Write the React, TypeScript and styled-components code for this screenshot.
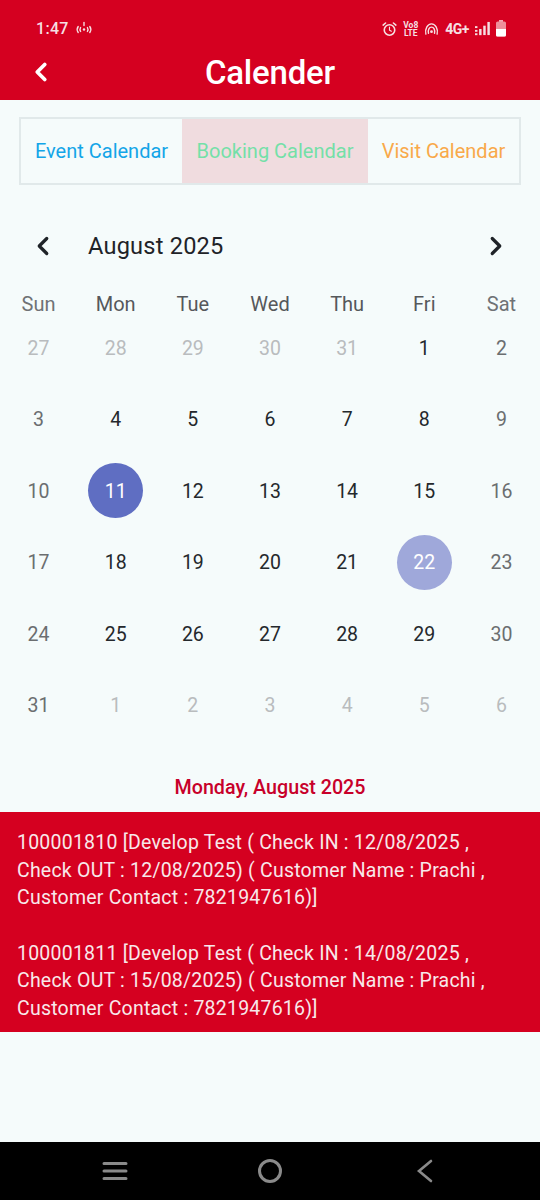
import styled, { createGlobalStyle } from 'styled-components';
import { ChevronLeft, ChevronRight } from 'lucide-react';

const GlobalStyle = createGlobalStyle`
  html, body {
    margin: 0;
    padding: 0;
    background: #f5fbfb;
    font-family: Roboto, 'Liberation Sans', sans-serif;
  }
  * { box-sizing: border-box; }
`;

const Screen = styled.div`
  width: 540px;
  height: 1200px;
  display: flex;
  flex-direction: column;
  background: #f5fbfb;
  overflow: hidden;
`;

const Header = styled.header`
  height: 100px;
  flex: none;
  background: #d50020;
  color: #fff;
  display: flex;
  flex-direction: column;
`;

const StatusBar = styled.div`
  height: 44px;
  padding: 13px 34px 0 36px;
  display: flex;
  align-items: center;
  justify-content: space-between;
`;

const StatusGroup = styled.div`
  display: flex;
  align-items: center;
  gap: 6px;
`;

const Time = styled.span`
  font-size: 16px;
  font-weight: 500;
  letter-spacing: 0.3px;
  color: #f6dfe2;
`;

const NetText = styled.span`
  font-size: 14px;
  font-weight: 700;
  letter-spacing: -0.5px;
  color: #f6dfe2;
`;

const VoLte = styled.span`
  font-size: 8.5px;
  font-weight: 700;
  line-height: 8px;
  text-align: center;
  color: #f6dfe2;
`;

const TitleBar = styled.div`
  flex: 1;
  display: grid;
  grid-template-columns: 82px 1fr 82px;
  align-items: center;
`;

const BackButton = styled.div`
  display: flex;
  padding-left: 26px;
`;

const PageTitle = styled.h1`
  margin: 0;
  text-align: center;
  font-size: 33px;
  font-weight: 500;
  letter-spacing: -0.2px;
`;

const Tabs = styled.div`
  margin: 17px 19px 0;
  height: 68px;
  display: grid;
  grid-template-columns: 161px 186px 1fr;
  border: 2px solid #e1e9ea;
  flex: none;
`;

const Tab = styled.div<{ $color: string; $active?: boolean }>`
  display: flex;
  align-items: center;
  justify-content: center;
  font-size: 20px;
  font-weight: 450;
  color: ${({ $color }) => $color};
  background: ${({ $active }) => ($active ? '#f0dcdf' : 'transparent')};
`;

const MonthRow = styled.div`
  margin-top: 39px;
  height: 44px;
  padding: 0 29px 0 28px;
  display: flex;
  align-items: center;
  flex: none;
`;

const MonthLabel = styled.div`
  flex: 1;
  margin-left: 30px;
  font-size: 23.6px;
  color: #1f2328;
  letter-spacing: 0.2px;
`;

const Weekdays = styled.div`
  margin-top: 28px;
  height: 16px;
  display: grid;
  grid-template-columns: repeat(7, 1fr);
  flex: none;
`;

const Weekday = styled.div<{ $weekend?: boolean }>`
  text-align: center;
  line-height: 16px;
  font-size: 20px;
  color: ${({ $weekend }) => ($weekend ? '#6f7275' : '#55585b')};
`;

const Days = styled.div`
  display: grid;
  grid-template-columns: repeat(7, 1fr);
  grid-auto-rows: 71.5px;
  flex: none;
`;

const DayCell = styled.div`
  display: flex;
  align-items: center;
  justify-content: center;
`;

type DayKind = 'muted' | 'weekend' | 'normal' | 'selected' | 'rangeEnd';

const dayColors: Record<DayKind, string> = {
  muted: '#b9bcbe',
  weekend: '#6b6e70',
  normal: '#24282c',
  selected: '#fff',
  rangeEnd: '#fff',
};

const dayBackgrounds: Record<DayKind, string> = {
  muted: 'transparent',
  weekend: 'transparent',
  normal: 'transparent',
  selected: '#5f6ec2',
  rangeEnd: '#9fa8da',
};

const DayNumber = styled.div<{ $kind: DayKind }>`
  width: 55px;
  height: 55px;
  padding-top: 1px;
  border-radius: 50%;
  display: flex;
  align-items: center;
  justify-content: center;
  font-size: 19.5px;
  color: ${({ $kind }) => dayColors[$kind]};
  background: ${({ $kind }) => dayBackgrounds[$kind]};
`;

const SelectedDate = styled.div`
  margin: 28px 0 5px;
  height: 38px;
  text-align: center;
  line-height: 38px;
  font-size: 19.7px;
  font-weight: 500;
  color: #c8002a;
  flex: none;
`;

const EventPanel = styled.section`
  height: 220px;
  flex: none;
  background: #d50020;
  color: #f8e8ea;
  padding: 17px 16px 0 17px;
  display: flex;
  flex-direction: column;
  gap: 28px;
`;

const EventText = styled.p`
  margin: 0;
  font-size: 19.5px;
  line-height: 27.5px;
  letter-spacing: 0.22px;
`;

const Spacer = styled.div`
  flex: 1;
`;

const NavBar = styled.nav`
  height: 58px;
  flex: none;
  background: #000;
  display: grid;
  grid-template-columns: repeat(3, 155px);
  justify-content: center;
`;

const NavItem = styled.div`
  display: flex;
  align-items: center;
  justify-content: center;
`;

const weekdays = ['Sun', 'Mon', 'Tue', 'Wed', 'Thu', 'Fri', 'Sat'];

const cells: { n: number; kind: DayKind }[] = [
  ...[27, 28, 29, 30, 31].map((n) => ({ n, kind: 'muted' as DayKind })),
  { n: 1, kind: 'normal' },
  { n: 2, kind: 'weekend' },
  ...Array.from({ length: 31 - 2 }, (_, i) => {
    const n = i + 3;
    const col = (n + 4) % 7;
    let kind: DayKind = col === 0 || col === 6 ? 'weekend' : 'normal';
    if (n === 11) kind = 'selected';
    if (n === 22) kind = 'rangeEnd';
    return { n, kind };
  }),
  ...[1, 2, 3, 4, 5, 6].map((n) => ({ n, kind: 'muted' as DayKind })),
];

const events = [
  '100001810 [Develop Test ( Check IN : 12/08/2025 , Check OUT : 12/08/2025) ( Customer Name : Prachi , Customer Contact : 7821947616)]',
  '100001811 [Develop Test ( Check IN : 14/08/2025 , Check OUT : 15/08/2025) ( Customer Name : Prachi , Customer Contact : 7821947616)]',
];

function HotspotIcon() {
  return (
    <svg width="18" height="16" viewBox="0 0 18 16" fill="none" stroke="#f6dfe2" strokeWidth="1.4" strokeLinecap="round">
      <path d="M3.2 5.5c-1.4 2-1.4 4 0 6" />
      <path d="M5.6 6.5c-.8 1.3-.8 2.7 0 4" />
      <path d="M14.8 5.5c1.4 2 1.4 4 0 6" />
      <path d="M12.4 6.5c.8 1.3.8 2.7 0 4" />
      <circle cx="9" cy="8.5" r="1.2" fill="#f6dfe2" stroke="none" />
      <path d="M9 1.5v3" />
    </svg>
  );
}

function AlarmIcon() {
  return (
    <svg width="15" height="16" viewBox="0 0 16 16" fill="none" stroke="#f6dfe2" strokeWidth="1.7" strokeLinecap="round">
      <circle cx="8" cy="9" r="5.6" />
      <path d="M8 6v3.2l2 1.2" strokeWidth="1.2" />
      <path d="M1.2 3.8 3.8 1.6M14.8 3.8 12.2 1.6" />
    </svg>
  );
}

function WifiCallIcon() {
  return (
    <svg width="15" height="16" viewBox="0 0 16 16" fill="none" stroke="#f6dfe2" strokeWidth="1.5" strokeLinecap="round">
      <path d="M2 13.5C.6 8 3.8 2.5 8 2.5s7.4 5.5 6 11" />
      <path d="M4.8 12.5C4 9 5.6 6 8 6s4 3 3.2 6.5" />
      <circle cx="8" cy="10.8" r="1.5" fill="#f6dfe2" stroke="none" />
    </svg>
  );
}

function SignalIcon() {
  return (
    <svg width="15" height="15" viewBox="0 0 16 15" fill="#f6dfe2">
      <rect x="0" y="5" width="2.6" height="2" />
      <rect x="0" y="9" width="2.6" height="2" />
      <rect x="0" y="12.6" width="2.6" height="2" />
      <rect x="4.4" y="8" width="2.6" height="6.6" />
      <rect x="8.8" y="4.5" width="2.6" height="10" />
      <rect x="13.2" y="0.5" width="2.6" height="14" />
    </svg>
  );
}

function BatteryIcon() {
  return (
    <svg width="10" height="17" viewBox="0 0 10 17">
      <rect x="3" y="0" width="4" height="2" fill="#f2a9b2" />
      <rect x="0" y="1.5" width="10" height="15" rx="1.6" fill="#ee8f9b" />
      <path d="M0 9h10v6a1.6 1.6 0 0 1-1.6 1.6H1.6A1.6 1.6 0 0 1 0 15z" fill="#fff" />
    </svg>
  );
}

export default function App() {
  return (
    <Screen>
      <GlobalStyle />
      <Header>
        <StatusBar>
          <StatusGroup>
            <Time>1:47</Time>
            <HotspotIcon />
          </StatusGroup>
          <StatusGroup>
            <AlarmIcon />
            <VoLte>
              Vo8
              <br />
              LTE
            </VoLte>
            <WifiCallIcon />
            <NetText>4G+</NetText>
            <SignalIcon />
            <BatteryIcon />
          </StatusGroup>
        </StatusBar>
        <TitleBar>
          <BackButton>
            <ChevronLeft size={30} color="#fff" strokeWidth={3} />
          </BackButton>
          <PageTitle>Calender</PageTitle>
        </TitleBar>
      </Header>

      <Tabs>
        <Tab $color="#13a5e8">Event Calendar</Tab>
        <Tab $color="#74e0a8" $active>
          Booking Calendar
        </Tab>
        <Tab $color="#f9a94a">Visit Calendar</Tab>
      </Tabs>

      <MonthRow>
        <ChevronLeft size={30} color="#1f2328" strokeWidth={2.6} />
        <MonthLabel>August 2025</MonthLabel>
        <ChevronRight size={30} color="#1f2328" strokeWidth={2.6} />
      </MonthRow>

      <Weekdays>
        {weekdays.map((d) => (
          <Weekday key={d} $weekend={d === 'Sun' || d === 'Sat'}>
            {d}
          </Weekday>
        ))}
      </Weekdays>

      <Days>
        {cells.map((c, i) => (
          <DayCell key={i}>
            <DayNumber $kind={c.kind}>{c.n}</DayNumber>
          </DayCell>
        ))}
      </Days>

      <SelectedDate>Monday, August 2025</SelectedDate>

      <EventPanel>
        {events.map((e) => (
          <EventText key={e}>{e}</EventText>
        ))}
      </EventPanel>

      <Spacer />

      <NavBar>
        <NavItem>
          <svg width="26" height="20" viewBox="0 0 26 20" stroke="#8a8a8a" strokeWidth="3" strokeLinecap="round">
            <path d="M2 2.5h22M2 10h22M2 17.5h22" />
          </svg>
        </NavItem>
        <NavItem>
          <svg width="26" height="26" viewBox="0 0 26 26" fill="none" stroke="#8a8a8a" strokeWidth="3">
            <circle cx="13" cy="13" r="10.5" />
          </svg>
        </NavItem>
        <NavItem>
          <svg width="18" height="24" viewBox="0 0 18 24" fill="none" stroke="#8a8a8a" strokeWidth="2.6" strokeLinecap="round">
            <path d="M15 2 3 12l12 10" />
          </svg>
        </NavItem>
      </NavBar>
    </Screen>
  );
}
